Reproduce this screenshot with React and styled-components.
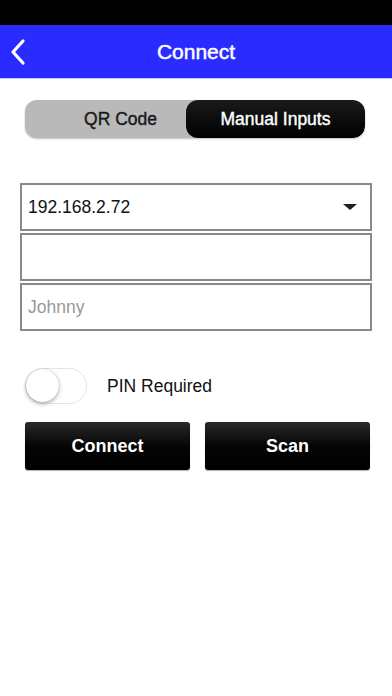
import React from "react";
import styled, { createGlobalStyle } from "styled-components";

const Global = createGlobalStyle`
  html, body { margin: 0; padding: 0; background: #fff; }
  body { font-family: "Liberation Sans", Arial, sans-serif; }
  * { box-sizing: border-box; }
`;

const Screen = styled.div`
  width: 392px;
  height: 696px;
  background: #fff;
  display: flex;
  flex-direction: column;
`;

const StatusBar = styled.div`
  height: 25px;
  background: #000;
`;

const NavBar = styled.div`
  height: 54px;
  background: #2a2cff;
  display: grid;
  grid-template-columns: 60px 1fr 60px;
  align-items: center;
  border-bottom: 1px solid #c8c8e8;
`;

const BackBtn = styled.div`
  padding-left: 9px;
  display: flex;
  align-items: center;
`;

const Title = styled.div`
  text-align: center;
  color: #fff;
  font-size: 21px;
  font-weight: 400;
  -webkit-text-stroke: 0.45px #fff;
  padding-top: 1px;
`;

const Content = styled.div`
  padding: 21px 20px 0 20px;
  display: flex;
  flex-direction: column;
`;

const Segmented = styled.div`
  margin: 0 7px 0 5px;
  height: 38px;
  border-radius: 12px;
  background: #b9b9b9;
  display: grid;
  grid-template-columns: 161px 1fr;
  overflow: hidden;
  box-shadow: 0 1px 2px rgba(0,0,0,0.25);
`;

const Segment = styled.div`
  display: flex;
  align-items: center;
  justify-content: center;
  font-size: 17.5px;
  font-weight: 400;
  color: ${p => (p.$active ? "#fff" : "#1a1a1a")};
  -webkit-text-stroke: 0.4px ${p => (p.$active ? "#fff" : "#1a1a1a")};
  background: ${p => (p.$active ? "linear-gradient(#1a1a1a, #000)" : "transparent")};
  border-radius: ${p => (p.$active ? "12px" : "0")};
  padding-left: ${p => (p.$active ? "0" : "30px")};
`;

const Fields = styled.div`
  margin-top: 45px;
  display: flex;
  flex-direction: column;
  gap: 2px;
`;

const Field = styled.div`
  height: 48px;
  border: 2px solid #8a8a8a;
  display: flex;
  align-items: center;
  justify-content: space-between;
  padding: 0 13px 0 6px;
  font-size: 17.5px;
  color: ${p => (p.$placeholder ? "#999" : "#111")};
`;

const Caret = styled.div`
  width: 0;
  height: 0;
  border-left: 7px solid transparent;
  border-right: 7px solid transparent;
  border-top: 6px solid #222;
`;

const ToggleRow = styled.div`
  margin-top: 37px;
  margin-left: 5px;
  display: flex;
  align-items: center;
  gap: 20px;
`;

const Track = styled.div`
  width: 62px;
  height: 36px;
  border-radius: 18px;
  border: 1.5px solid #e4e4e4;
  background: #fff;
  position: relative;
`;

const Knob = styled.div`
  position: absolute;
  top: 0px;
  left: 0px;
  width: 33px;
  height: 33px;
  border-radius: 50%;
  background: #fff;
  box-shadow: 0 2px 4px rgba(0,0,0,0.3), 0 0 1px rgba(0,0,0,0.3);
`;

const ToggleLabel = styled.div`
  font-size: 17.5px;
  color: #111;
`;

const Buttons = styled.div`
  margin-top: 18px;
  margin-left: 5px;
  margin-right: 2px;
  display: grid;
  grid-template-columns: 165px 165px;
  justify-content: space-between;
`;

const Button = styled.div`
  height: 48px;
  border-radius: 3px;
  background: linear-gradient(#2a2a2a, #050505 50%, #000);
  color: #fff;
  font-size: 18px;
  font-weight: 700;
  display: flex;
  align-items: center;
  justify-content: center;
  box-shadow: 0 1px 1px rgba(0,0,0,0.3);
`;

export default function App() {
  return (
    <>
      <Global />
      <Screen>
        <StatusBar />
        <NavBar>
          <BackBtn>
            <svg width="18" height="28" viewBox="0 0 18 28">
              <path d="M14 3 L4 14 L14 25" fill="none" stroke="#fff" strokeWidth="3.2" strokeLinecap="round" strokeLinejoin="round" />
            </svg>
          </BackBtn>
          <Title>Connect</Title>
          <div />
        </NavBar>
        <Content>
          <Segmented>
            <Segment>QR Code</Segment>
            <Segment $active>Manual Inputs</Segment>
          </Segmented>
          <Fields>
            <Field>
              <span>192.168.2.72</span>
              <Caret />
            </Field>
            <Field />
            <Field $placeholder>Johnny</Field>
          </Fields>
          <ToggleRow>
            <Track>
              <Knob />
            </Track>
            <ToggleLabel>PIN Required</ToggleLabel>
          </ToggleRow>
          <Buttons>
            <Button>Connect</Button>
            <Button>Scan</Button>
          </Buttons>
        </Content>
      </Screen>
    </>
  );
}
